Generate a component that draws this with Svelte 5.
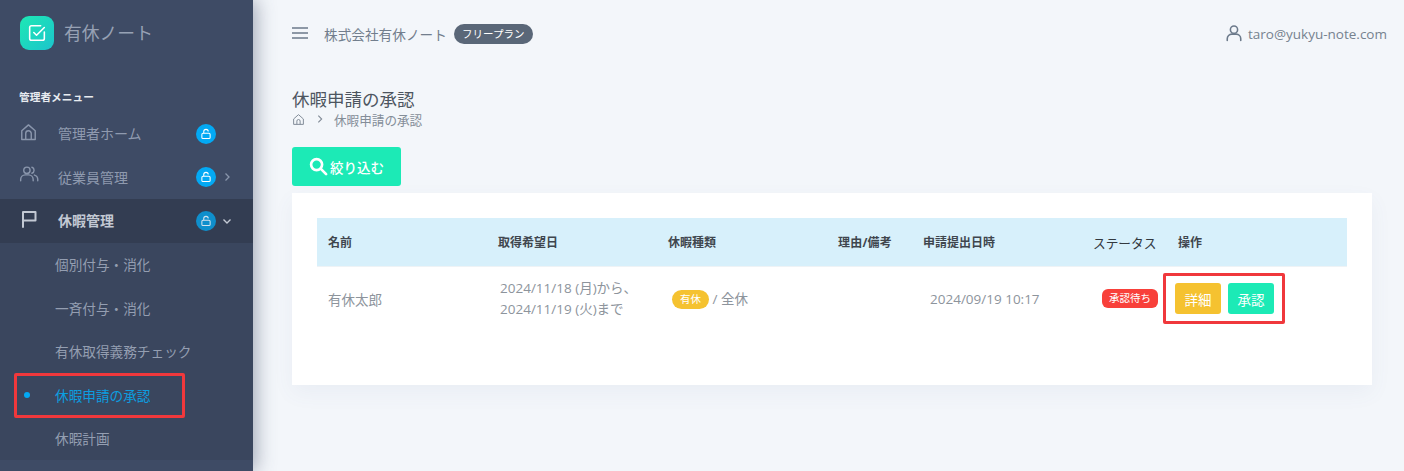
<script>
  const mainItems = [
    { label: '管理者ホーム', icon: 'home' },
    { label: '従業員管理', icon: 'users', chevron: 'right' }
  ];
  const subItems = ['個別付与・消化', '一斉付与・消化', '有休取得義務チェック'];
</script>

<div class="page">
  <aside class="sidebar">
    <div class="brand">
      <div class="logo">
        <svg viewBox="0 0 24 24" width="22" height="22" fill="none" stroke="#fff" stroke-width="1.7" stroke-linecap="round" stroke-linejoin="round">
          <path d="M20 11v7a2 2 0 0 1-2 2H6a2 2 0 0 1-2-2V6a2 2 0 0 1 2-2h10" />
          <path d="M8.5 11.5l3 3L20 6" />
        </svg>
      </div>
      <span class="brand-name">有休ノート</span>
    </div>
    <div class="section-label">管理者メニュー</div>

    <div class="nav-list">
    {#each mainItems as item}
      <div class="nav-item">
        <span class="nav-icon">
          {#if item.icon === 'home'}
            <svg class="home" viewBox="0 0 24 24" width="19" height="20" fill="none" stroke="#8a96ac" stroke-width="1.8" stroke-linejoin="round">
              <path d="M3.500 10.500L12 3l8.500 7.500V21.500H3.500z" /><path d="M8.500 21.500v-7.500a3.500 3.500 0 0 1 7 0v7.500" />
            </svg>
          {:else}
            <svg class="up" viewBox="0 0 24 24" width="20" height="20" fill="none" stroke="#8a96ac" stroke-width="1.7" stroke-linecap="round">
              <circle cx="9.5" cy="7.5" r="3.8" /><path d="M2 20v-1.5a5.5 5.5 0 0 1 5.5-5.5h4a5.5 5.5 0 0 1 5.5 5.5V20" />
              <path d="M15.5 3.9a3.8 3.8 0 0 1 0 7.2M18.5 13.3a5.5 5.5 0 0 1 4 5.2V20" />
            </svg>
          {/if}
        </span>
        <span class="nav-label">{item.label}</span>
        <span class="lock">
          <svg viewBox="0 0 16 16" width="12" height="12" fill="none" stroke="#fff" stroke-width="1.4"><rect x="2.5" y="7" width="11" height="7" rx="1.5" /><path d="M5 7V4.8a3 3 0 0 1 6 0" /></svg>
        </span>
        {#if item.chevron}
          <svg class="chev" viewBox="0 0 12 12" width="12" height="12" fill="none" stroke="#8a96ac" stroke-width="1.3"><path d="M4.5 2.5L8 6l-3.500 3.500" /></svg>
        {/if}
      </div>
    {/each}

    <div class="nav-item active">
      <span class="nav-icon">
        <svg class="flag" viewBox="0 0 18 18" width="18" height="18" fill="none" stroke="#c3c9d4" stroke-width="2" stroke-linejoin="round" stroke-linecap="round"><path d="M3 17V2h12.500v8.500H3" /></svg>
      </span>
      <span class="nav-label strong">休暇管理</span>
      <span class="lock dim">
        <svg viewBox="0 0 16 16" width="12" height="12" fill="none" stroke="#d5e4ef" stroke-width="1.4"><rect x="2.500" y="7" width="11" height="7" rx="1.500" /><path d="M5 7V4.800a3 3 0 0 1 6 0" /></svg>
      </span>
      <svg class="chev" viewBox="0 0 12 12" width="12" height="12" fill="none" stroke="#c3c9d4" stroke-width="1.4"><path d="M2.500 4.500L6 8l3.500-3.500" /></svg>
    </div>
    </div>

    <div class="sub-list">
      {#each subItems as label}
        <div class="sub-item">{label}</div>
      {/each}
      <div class="sub-item current">
        <span class="dot"></span>休暇申請の承認
        <span class="mark mark-side"></span>
      </div>
      <div class="sub-item">休暇計画</div>
    </div>
  </aside>

  <main class="main">
    <header class="topbar">
      <svg class="burger" viewBox="0 0 16 12" width="16" height="12" fill="none" stroke="#6c7a8b" stroke-width="1.500"><path d="M0 1h16M0 6h16M0 11h16" /></svg>
      <span class="company">株式会社有休ノート</span>
      <span class="plan">フリープラン</span>
      <span class="user">
        <svg viewBox="0 0 24 24" width="18" height="18" fill="none" stroke="#6c7a8b" stroke-width="2.100" stroke-linecap="round"><circle cx="12" cy="7.500" r="4.800" /><path d="M3 22v-2.500a6 6 0 0 1 6-6h6a6 6 0 0 1 6 6V22" /></svg>
        taro@yukyu-note.com
      </span>
    </header>

    <h1 class="title">休暇申請の承認</h1>
    <nav class="crumbs">
      <svg viewBox="0 0 24 24" width="13" height="13" fill="none" stroke="#808a96" stroke-width="1.800" stroke-linejoin="round"><path d="M3 11L12 3l9 8v10H3z" /><path d="M9 21v-6a3 3 0 0 1 6 0v6" /></svg>
      <svg class="crumb-chev" viewBox="0 0 12 12" width="10" height="10" fill="none" stroke="#808a96" stroke-width="1.300"><path d="M4 2l4 4-4 4" /></svg>
      <span>休暇申請の承認</span>
    </nav>

    <button class="filter">
      <svg viewBox="0 0 20 20" width="19" height="19" fill="none" stroke="#fff" stroke-width="2.800" stroke-linecap="round"><circle cx="8" cy="8" r="5.800" /><path d="M12.500 12.500L18 18" /></svg>
      絞り込む
    </button>

    <section class="card">
      <div class="row head">
        <div>名前</div>
        <div>取得希望日</div>
        <div>休暇種類</div>
        <div class="wide">理由/備考</div>
        <div>申請提出日時</div>
        <div class="thin">ステータス</div>
        <div>操作</div>
      </div>
      <div class="row body">
        <div>有休太郎</div>
        <div class="date">2024/11/18 (月)から、<br />2024/11/19 (火)まで</div>
        <div class="kind"><span class="tag yellow">有休</span> / 全休</div>
        <div></div>
        <div class="submitted">2024/09/19 10:17</div>
        <div class="status"><span class="tag red">承認待ち</span></div>
        <div class="actions">
          <button class="act yellow-btn">詳細</button>
          <button class="act green-btn">承認</button>
          <span class="mark mark-actions"></span>
        </div>
      </div>
    </section>
  </main>
</div>

<style>
  :global(body) {
    margin: 0;
    overflow: hidden;
    background: #f3f6fa;
  }
  .page {
    display: flex;
    width: 1404px;
    height: 471px;
    overflow: hidden;
    font-family: "Open Sans", "Noto Sans CJK JP", sans-serif;
    color: #6c757d;
  }
  .sidebar {
    width: 253px;
    flex: none;
    height: 471px;
    background: #3e4b65;
    box-shadow: 3px 0 18px rgba(60, 72, 100, 0.45);
    position: relative;
    z-index: 2;
    overflow: hidden;
  }
  .brand {
    display: flex;
    align-items: center;
    height: 34px;
    padding: 16px 0 0 20px;
  }
  .logo {
    width: 34px;
    height: 34px;
    border-radius: 9px;
    background: linear-gradient(135deg, #1ee8b4, #1cc4cc);
    display: flex;
    align-items: center;
    justify-content: center;
  }
  .brand-name {
    margin: -2px 0 0 10px;
    font-size: 17.800px;
    color: #97a1b4;
  }
  .section-label {
    margin: 39px 0 0 19px;
    height: 16px;
    line-height: 16px;
    font-size: 10.700px;
    font-weight: 700;
    color: #e8ebf0;
  }
  .nav-list {
    margin-top: 7px;
  }
  .nav-item {
    display: flex;
    align-items: center;
    height: 43.500px;
    padding-left: 19px;
    color: #8f9aaf;
    font-size: 14px;
  }
  .nav-icon {
    width: 39px;
    flex: none;
    display: flex;
  }
  .home {
    margin-top: -3px;
  }
  .up {
    margin-top: -6px;
  }
  .flag {
    margin-top: -4px;
    margin-left: 1px;
  }
  .nav-label {
    width: 138px;
    flex: none;
    margin-top: -1px;
  }
  .strong {
    font-weight: 700;
    color: #c3c9d4;
    margin-top: -2px;
  }
  .lock {
    width: 20px;
    height: 20px;
    flex: none;
    border-radius: 50%;
    background: #03a9f4;
    display: flex;
    align-items: center;
    justify-content: center;
  }
  .lock.dim {
    background: #0f8fcc;
  }
  .chev {
    margin-left: 5px;
  }
  .active {
    background: #333d52;
  }
  .sub-list {
    background: #3a465e;
  }
  .sub-item {
    position: relative;
    display: flex;
    align-items: center;
    height: 43.500px;
    padding-left: 55px;
    font-size: 13.650px;
    color: #949eb1;
  }
  .current {
    color: #0c9ee0;
  }
  .dot {
    position: absolute;
    left: 23.500px;
    width: 6px;
    height: 6px;
    border-radius: 50%;
    background: #03a9f4;
  }
  .mark {
    position: absolute;
    border: 3px solid #f0383c;
    border-radius: 2px;
    box-sizing: border-box;
    pointer-events: none;
  }
  .mark-side {
    left: 14px;
    top: 0;
    width: 171px;
    height: 45px;
  }
  .main {
    flex: 1;
    min-width: 0;
    padding: 0 32px 0 39px;
    background: #f3f6fa;
  }
  .topbar {
    display: flex;
    align-items: center;
    height: 68px;
    font-size: 13.670px;
    color: #6c7a8b;
  }
  .burger {
    margin-top: -2px;
  }
  .company {
    margin-left: 16px;
    color: #727e8d;
  }
  .plan {
    margin-left: 7px;
    height: 20px;
    line-height: 20px;
    padding: 0 8px;
    border-radius: 10px;
    background: #5a6778;
    color: #fff;
    font-size: 10.500px;
    letter-spacing: 0.050px;
    margin-top: -1px;
  }
  .user {
    margin-left: auto;
    margin-right: -15px;
    display: flex;
    align-items: center;
    gap: 5px;
    font-size: 13.500px;
    color: #76828f;
  }
  .user svg {
    margin-left: -3px;
    margin-top: -2px;
  }
  .title {
    margin: 20px 0 0;
    font-size: 17.500px;
    line-height: 22px;
    font-weight: 400;
    color: #4d5560;
  }
  .crumbs {
    display: flex;
    align-items: center;
    height: 20px;
    margin-top: -1px;
    font-size: 12.600px;
    color: #848d98;
  }
  .crumb-chev {
    margin: 0 9px 0 10px;
  }
  .filter {
    display: flex;
    align-items: center;
    justify-content: center;
    gap: 2px;
    width: 109px;
    height: 39px;
    margin-top: 18px;
    padding: 0;
    border: 0;
    border-radius: 3px;
    background: #1ceab6;
    color: #fff;
    font: 500 13.500px "Open Sans", "Noto Sans CJK JP", sans-serif;
  }
  .card {
    margin-top: 7px;
    width: 1080px;
    height: 192px;
    box-sizing: border-box;
    padding: 25px;
    background: #fff;
    box-shadow: 0 8px 20px rgba(80, 110, 150, 0.06);
  }
  .row {
    display: grid;
    grid-template-columns: 170px 170px 170px 85px 170px 85px 180px;
    align-items: center;
    font-size: 13.500px;
  }
  .row > div {
    padding-left: 11px;
    box-sizing: border-box;
  }
  .head {
    height: 48px;
    background: #d7f0fb;
    color: #3f464e;
    font-weight: 700;
    font-size: 12px;
    border-bottom: 1px solid #eef3f6;
    box-sizing: content-box;
  }
  .head .wide {
    letter-spacing: 0.200px;
    white-space: nowrap;
  }
  .head .thin {
    font-weight: 400;
    font-size: 12.700px;
    color: #33393f;
    white-space: nowrap;
  }
  .body {
    height: 63px;
    color: #8d949c;
  }
  .body .date {
    padding-left: 13px;
    line-height: 21px;
    white-space: nowrap;
  }
  .body .kind {
    padding-left: 15px;
    white-space: nowrap;
  }
  .tag {
    display: inline-block;
    height: 19px;
    line-height: 19px;
    color: #fff;
    font-size: 10.500px;
    vertical-align: 1px;
  }
  .yellow {
    padding: 0 8px;
    border-radius: 10px;
    background: #f5c230;
  }
  .body .submitted {
    padding-left: 18px;
    white-space: nowrap;
  }
  .body .status {
    padding-left: 20px;
    white-space: nowrap;
  }
  .red {
    padding: 0 7px;
    border-radius: 6px;
    background: #f8403a;
  }
  .body .actions {
    position: relative;
    display: flex;
    gap: 7px;
    padding-left: 8px;
  }
  .act {
    width: 46px;
    height: 31px;
    padding: 0;
    border: 0;
    border-radius: 3px;
    color: #fff;
    font: 400 13.500px "Open Sans", "Noto Sans CJK JP", sans-serif;
  }
  .yellow-btn {
    background: #f5c230;
  }
  .green-btn {
    background: #1ceab6;
  }
  .mark-actions {
    left: -4px;
    top: 50%;
    margin-top: -26px;
    width: 122px;
    height: 51px;
  }
</style>
